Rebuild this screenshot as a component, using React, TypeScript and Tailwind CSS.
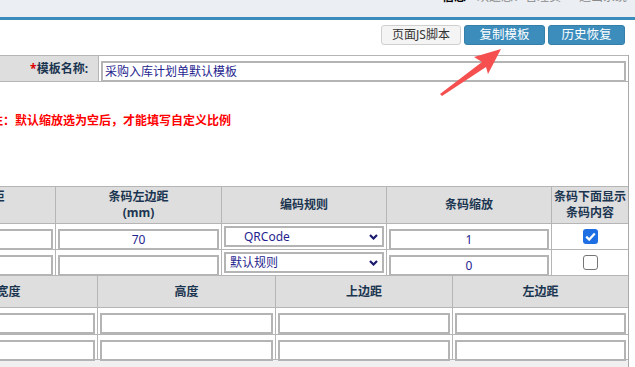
const fieldCls =
  "w-full h-[21px] border-2 border-[#b4b4b4] bg-white text-[12px] leading-[17px] text-[#1f1f8f] outline-none";

const Chevron = () => (
  <svg width="9" height="6" viewBox="0 0 9 6" className="shrink-0">
    <path d="M1 1l3.5 3.5L8 1" stroke="#1a1a6e" strokeWidth="2.2" fill="none" />
  </svg>
);

const FakeSelect = ({ text, indent }: { text: string; indent: string }) => (
  <div
    className={`flex h-[21px] items-center justify-between border-2 border-[#b4b4b4] bg-white pr-[4px] text-[12px] text-[#1f1f8f] ${indent}`}
  >
    <span>{text}</span>
    <Chevron />
  </div>
);

const Check = ({ on }: { on: boolean }) =>
  on ? (
    <div className="flex h-[15px] w-[15px] items-center justify-center rounded-[3px] bg-[#1d6fe3]">
      <svg width="11" height="9" viewBox="0 0 11 9">
        <path d="M1.2 4.6l3 3L9.8 1.4" stroke="white" strokeWidth="2.2" fill="none" />
      </svg>
    </div>
  ) : (
    <div className="h-[15px] w-[15px] rounded-[3px] border border-[#767676] bg-white" />
  );

const th = "flex items-center justify-center border-r border-b border-[#b5b5b5] bg-[#dedede] text-center text-[12px] font-bold leading-[16px] text-[#1b3550]";
const td = "border-r border-b border-[#b5b5b5] px-[2px] pt-[2px]";

export default function App() {
  return (
    <div className="relative h-[367px] w-[635px] overflow-hidden bg-white font-['Noto_Sans','Noto_Sans_CJK_SC',sans-serif]">
      {/* top bar, text scrolled mostly out of view */}
      <div className="h-[17px] overflow-hidden border-b-[3px] border-[#3b8bbb] bg-[#ebeef3] box-content">
        <div className="-mt-[11px] flex justify-end pr-[8px] text-[12px] leading-[16px]">
          <span className="font-bold text-black">信息</span>
          <span className="ml-[11px] text-[#8a8a8a]">欢迎您：管理员</span>
          <span className="ml-[18px] text-[#8a8a8a]">退出系统</span>
        </div>
      </div>

      {/* toolbar */}
      <div className="flex justify-end gap-[3px] pr-[10px] pt-[5px]">
        <button className="h-[20px] w-[80px] rounded-[3px] border border-[#cfcfcf] bg-[#f4f4f4] text-[12px] text-[#333]">
          页面JS脚本
        </button>
        <button className="h-[20px] w-[81px] rounded-[3px] border border-[#367fa9] bg-[#3c8dbc] text-[12.5px] text-white">
          复制模板
        </button>
        <button className="h-[20px] w-[77px] rounded-[3px] border border-[#367fa9] bg-[#3c8dbc] text-[12.5px] text-white">
          历史恢复
        </button>
      </div>

      {/* panel */}
      <div className="-ml-[120px] mt-[10px] w-[749px] border-r border-[#a9a9a9]">
        <div className="flex h-[27px] border-y border-[#b5b5b5]">
          <div className="flex w-[219px] items-center justify-end border-r border-[#b5b5b5] bg-[#dedede] pr-[10px] text-[12px] font-bold text-[#1b3550]">
            <span className="text-[#e00000]">*</span>模板名称:
          </div>
          <div className="flex-1 px-[2px] pt-[2px]">
            <input readOnly className={`${fieldCls} px-[2px]`} defaultValue="采购入库计划单默认模板" />
          </div>
        </div>

        <div className="h-[104px] pl-[111px] pt-[31px] text-[12px] font-bold leading-[16px] text-[#ff0000]">
          注：默认缩放选为空后，才能填写自定义比例
        </div>

        {/* barcode table */}
        <div className="grid grid-cols-[176px_166px_165px_165px_76px] grid-rows-[37px_26px_26px] border-t border-[#b5b5b5]">
          <div className={`${th} pl-[14px]`}>
            条码上边距
            <br />
            (mm)
          </div>
          <div className={th}>
            条码左边距
            <br />
            (mm)
          </div>
          <div className={th}>编码规则</div>
          <div className={th}>条码缩放</div>
          <div className={`${th} border-r-0`}>
            条码下面显示
            <br />
            条码内容
          </div>

          <div className={td}>
            <input readOnly className={fieldCls} defaultValue="" />
          </div>
          <div className={td}>
            <input readOnly className={`${fieldCls} text-center`} defaultValue="70" />
          </div>
          <div className={td}>
            <FakeSelect text="QRCode" indent="pl-[18px]" />
          </div>
          <div className={td}>
            <input readOnly className={`${fieldCls} text-center`} defaultValue="1" />
          </div>
          <div className="flex items-center justify-center border-b border-[#b5b5b5]">
            <Check on />
          </div>

          <div className={td}>
            <input readOnly className={fieldCls} defaultValue="" />
          </div>
          <div className={td}>
            <input readOnly className={fieldCls} defaultValue="" />
          </div>
          <div className={td}>
            <FakeSelect text="默认规则" indent="pl-[4px]" />
          </div>
          <div className={td}>
            <input readOnly className={`${fieldCls} text-center`} defaultValue="0" />
          </div>
          <div className="flex items-center justify-center border-b border-[#b5b5b5]">
            <Check on={false} />
          </div>
        </div>

        {/* size table */}
        <div className="grid grid-cols-[218px_178px_177px_175px] grid-rows-[32px_27px_25px]">
          <div className={`${th} pl-[16px]`}>条码宽度</div>
          <div className={th}>高度</div>
          <div className={th}>上边距</div>
          <div className={`${th} border-r-0`}>左边距</div>
          {[0, 1].map((r) =>
            [0, 1, 2, 3].map((c) => (
              <div key={`${r}-${c}`} className={`${td} ${c === 3 ? "border-r-0" : ""}`}>
                <input readOnly className={fieldCls} defaultValue="" />
              </div>
            ))
          )}
        </div>
        <div className="h-[20px] bg-[#f0f0f0]" />
      </div>

      {/* annotation arrow */}
      <svg className="pointer-events-none absolute left-0 top-0" width="635" height="367">
        <polygon
          points="501,49 474,57 482,62 440,94 442,96 486,67 488,74"
          fill="#f5504f"
        />
      </svg>
    </div>
  );
}
